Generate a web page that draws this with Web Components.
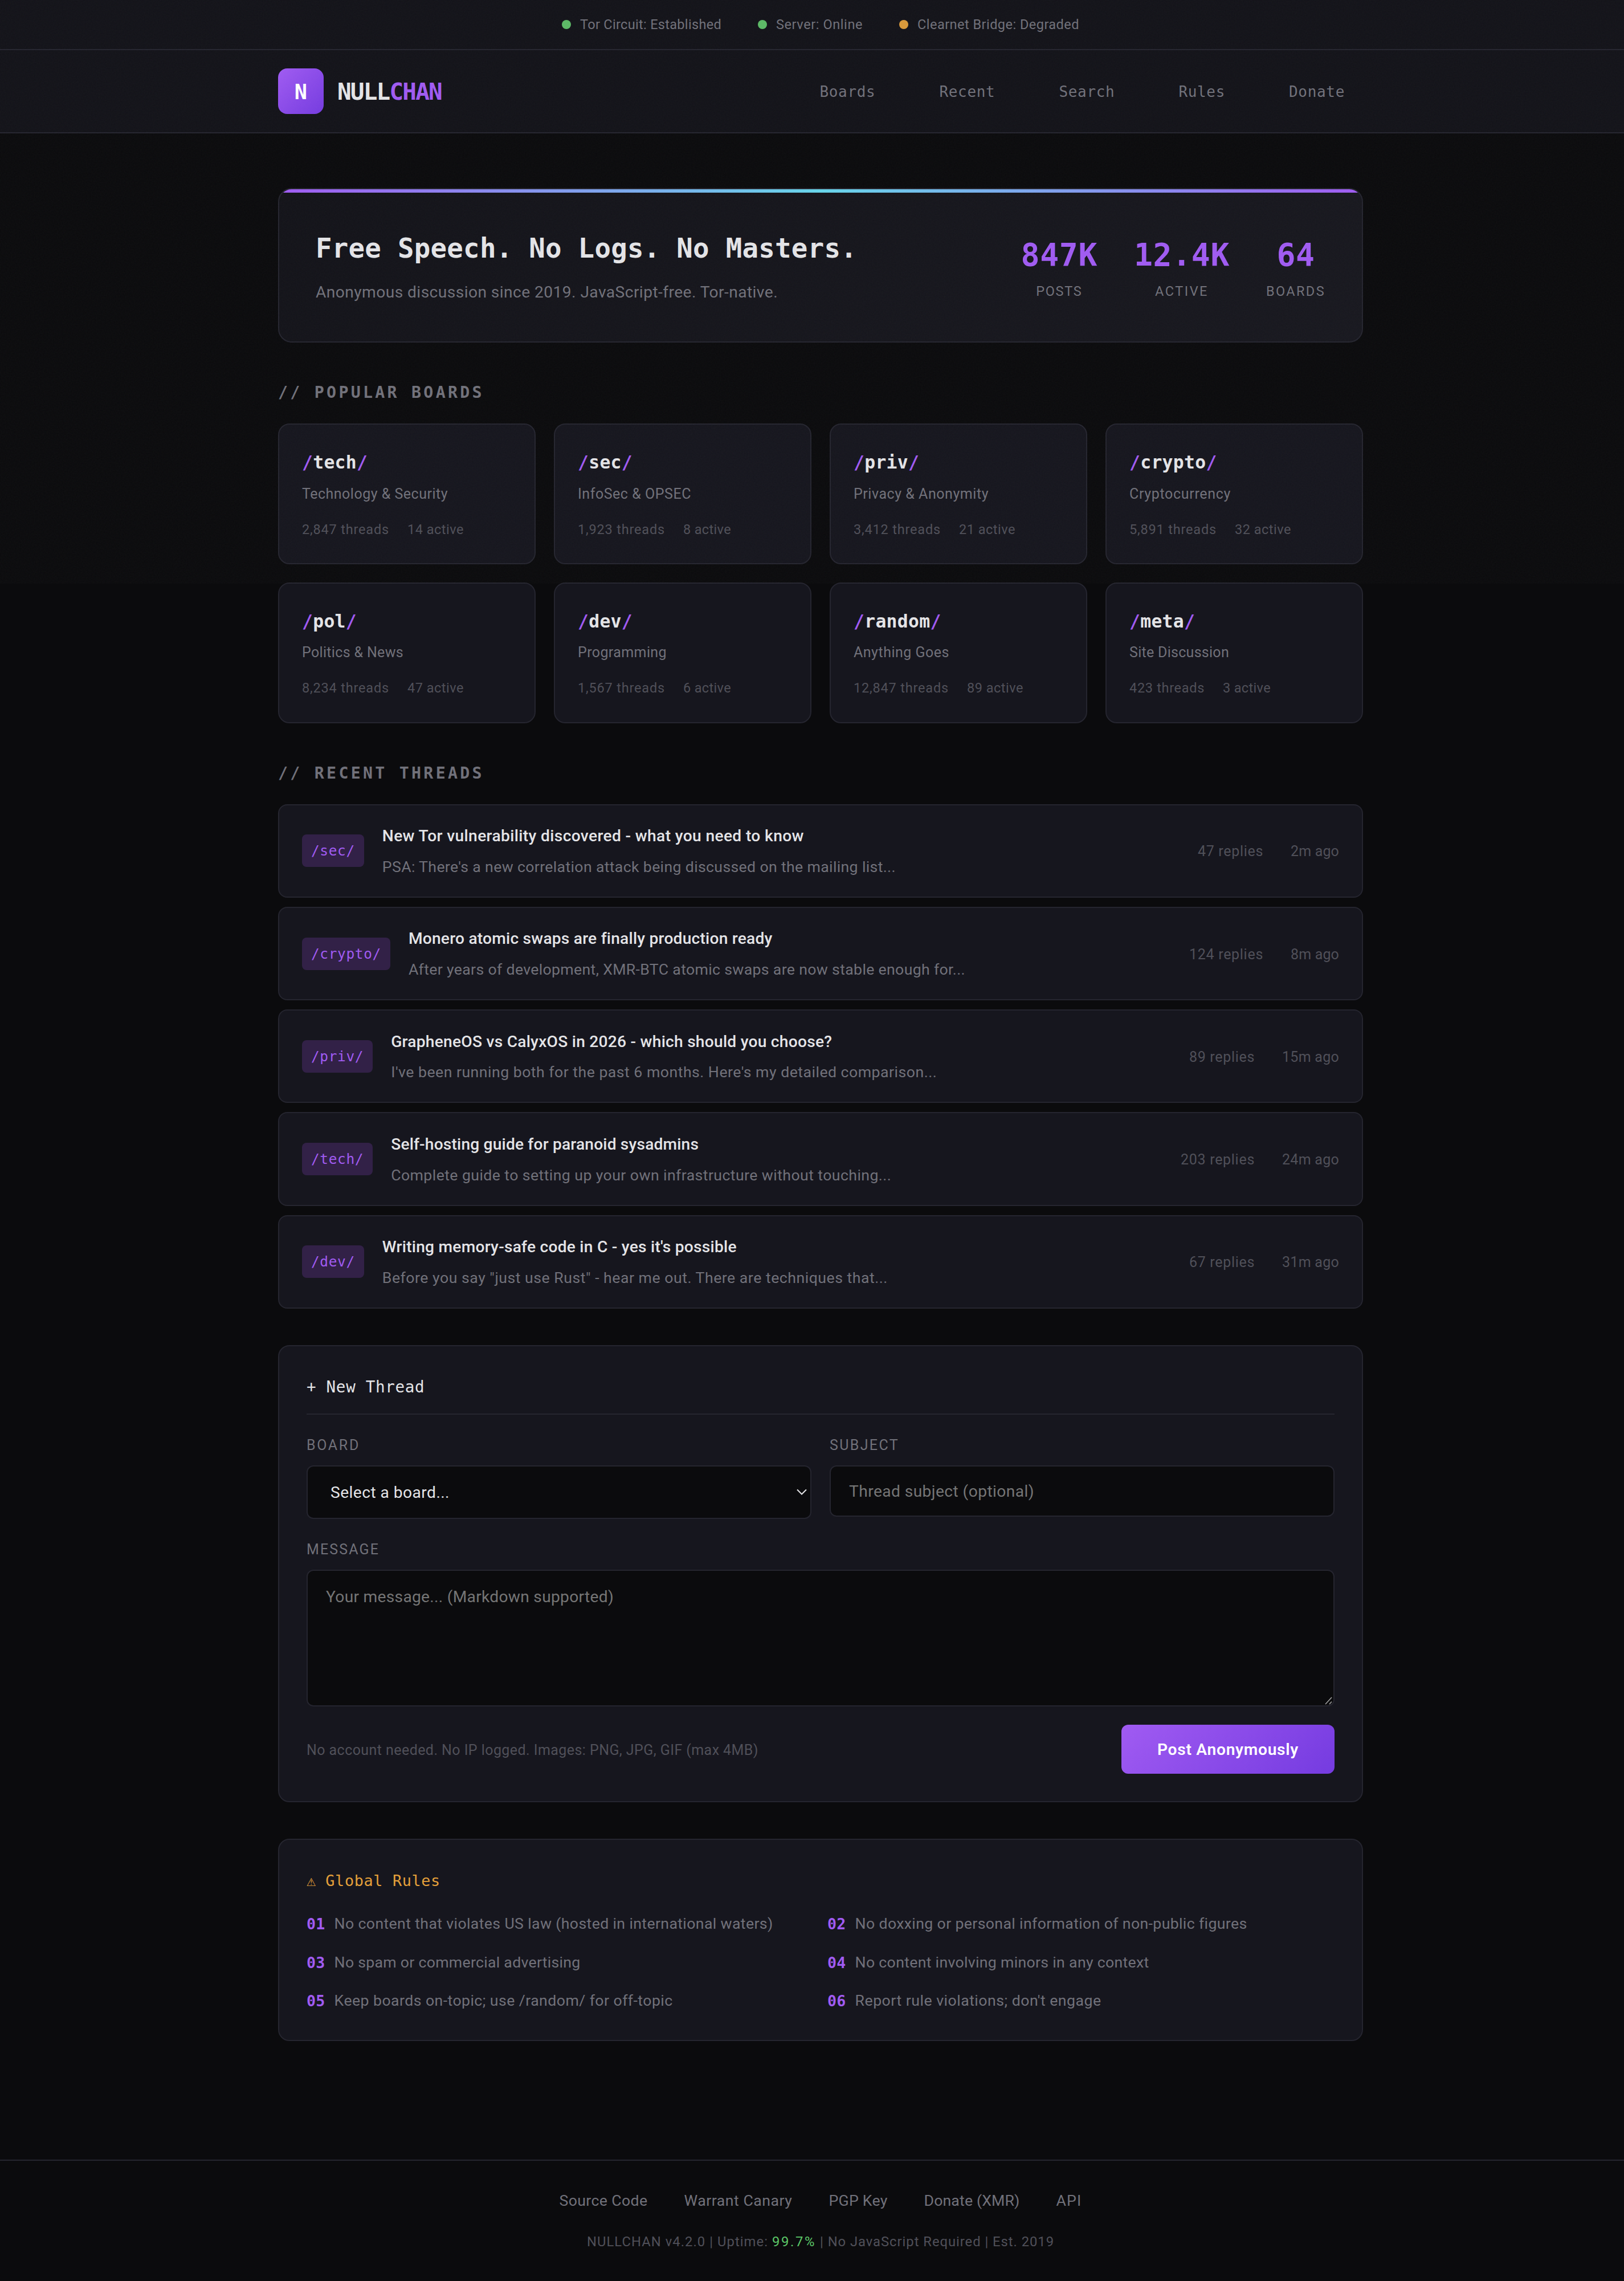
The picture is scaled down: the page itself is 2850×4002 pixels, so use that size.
<!DOCTYPE html>
<html lang="en">
<head>
<meta charset="utf-8">
<title>NULLCHAN</title>
<style>
    :root {
        --bg: #0b0b0d;
        --bg-raised: #131319;
        --card: #16161e;
        --border: #25252f;
        --text: #e4e4e7;
        --muted: #71717a;
        --dim: #505059;
        --accent: #a05bf2;
        --accent-deep: #753be0;
        --green: #5cba66;
        --amber: #e5a03a;
        --sans: Roboto, "Open Sans", sans-serif;
        --mono: "DejaVu Sans Mono", "Liberation Mono", monospace;
    }
    html {
        overflow: hidden;
        background: var(--bg);
    }
    body {
        margin: 0;
        width: 2880px;
        height: 4002px;
        overflow: hidden;
        background: var(--bg);
        color: var(--text);
        font-family: var(--sans);
    }
    main {
        width: 1904px;
        margin: 0 auto;
        padding-top: 96px;
    }
    .boards {
        display: grid;
        grid-template-columns: repeat(4, 1fr);
        gap: 32px;
        margin-bottom: 64px;
    }
    .threads {
        display: grid;
        gap: 16px;
        margin-bottom: 64px;
    }
</style>
</head>
<body>
<noise-layer></noise-layer>
<status-bar>
    <status-item w="248">Tor Circuit: Established</status-item>
    <status-item w="152">Server: Online</status-item>
    <status-item w="284" state="warn">Clearnet Bridge: Degraded</status-item>
</status-bar>
<site-header></site-header>
<main>
    <hero-banner>
        <hero-stat value="847K" label="Posts" w="81"></hero-stat>
        <hero-stat value="12.4K" label="Active" w="94"></hero-stat>
        <hero-stat value="64" label="Boards" w="104"></hero-stat>
    </hero-banner>

    <section-title>// POPULAR BOARDS</section-title>
    <div class="boards">
        <board-card name="tech" desc="Technology &amp; Security" dw="256" threads="2,847" tw="153" active="14" aw="99"></board-card>
        <board-card name="sec" desc="InfoSec &amp; OPSEC" dw="199" threads="1,923" tw="153" active="8" aw="84"></board-card>
        <board-card name="priv" desc="Privacy &amp; Anonymity" dw="237" threads="3,412" tw="153" active="21" aw="99"></board-card>
        <board-card name="crypto" desc="Cryptocurrency" dw="178" threads="5,891" tw="153" active="32" aw="99"></board-card>
        <board-card name="pol" desc="Politics &amp; News" dw="178" threads="8,234" tw="153" active="47" aw="99"></board-card>
        <board-card name="dev" desc="Programming" dw="156" threads="1,567" tw="153" active="6" aw="84"></board-card>
        <board-card name="random" desc="Anything Goes" dw="168" threads="12,847" tw="167" active="89" aw="99"></board-card>
        <board-card name="meta" desc="Site Discussion" dw="175" threads="423" tw="132" active="3" aw="84"></board-card>
    </div>

    <section-title>// RECENT THREADS</section-title>
    <div class="threads">
        <thread-row board="/sec/" replies="47 replies" rw="115" time="2m ago" mw="85">
            <fit-text w="740">New Tor vulnerability discovered - what you need to know</fit-text>
            <fit-text slot="excerpt" w="901">PSA: There's a new correlation attack being discussed on the mailing list...</fit-text>
        </thread-row>
        <thread-row board="/crypto/" replies="124 replies" rw="130" time="8m ago" mw="85">
            <fit-text w="638">Monero atomic swaps are finally production ready</fit-text>
            <fit-text slot="excerpt" w="977">After years of development, XMR-BTC atomic swaps are now stable enough for...</fit-text>
        </thread-row>
        <thread-row board="/priv/" replies="89 replies" rw="115" time="15m ago" mw="100">
            <fit-text w="774">GrapheneOS vs CalyxOS in 2026 - which should you choose?</fit-text>
            <fit-text slot="excerpt" w="958">I've been running both for the past 6 months. Here's my detailed comparison...</fit-text>
        </thread-row>
        <thread-row board="/tech/" replies="203 replies" rw="130" time="24m ago" mw="100">
            <fit-text w="540">Self-hosting guide for paranoid sysadmins</fit-text>
            <fit-text slot="excerpt" w="878">Complete guide to setting up your own infrastructure without touching...</fit-text>
        </thread-row>
        <thread-row board="/dev/" replies="67 replies" rw="115" time="31m ago" mw="100">
            <fit-text w="622">Writing memory-safe code in C - yes it's possible</fit-text>
            <fit-text slot="excerpt" w="887">Before you say "just use Rust" - hear me out. There are techniques that...</fit-text>
        </thread-row>
    </div>

    <post-form></post-form>

    <rules-box>
        <rule-item num="01" w="770">No content that violates US law (hosted in international waters)</rule-item>
        <rule-item num="02" w="687">No doxxing or personal information of non-public figures</rule-item>
        <rule-item num="03" w="432">No spam or commercial advertising</rule-item>
        <rule-item num="04" w="516">No content involving minors in any context</rule-item>
        <rule-item num="05" w="594">Keep boards on-topic; use /random/ for off-topic</rule-item>
        <rule-item num="06" w="432">Report rule violations; don't engage</rule-item>
    </rules-box>
</main>
<site-footer></site-footer>

<script>
    // Base class: renders template() into an open shadow root
    class BaseElement extends HTMLElement {
        constructor() {
            super();
            this.attachShadow({ mode: 'open' });
        }

        connectedCallback() {
            this.shadowRoot.innerHTML = this.template();
        }

        attr(name) {
            return this.getAttribute(name) || '';
        }
    }

    // Single line of text, tracked so that it is exactly `w` pixels wide
    class FitText extends BaseElement {
        template() {
            return `
                <style>
                    :host {
                        display: inline-block;
                        white-space: nowrap;
                        transform: translateY(0.02em);
                    }
                </style>
                <slot></slot>
            `;
        }

        connectedCallback() {
            super.connectedCallback();
            requestAnimationFrame(() => this.fit());
            this.fit();
        }

        fit() {
            const target = parseFloat(this.getAttribute('w'));
            const length = this.textContent.length;
            if (!target || !length) return;
            this.style.letterSpacing = '0px';
            const range = document.createRange();
            range.selectNodeContents(this);
            const natural = range.getBoundingClientRect().width;
            if (natural) {
                this.style.letterSpacing = (target - natural) / length + 'px';
            }
        }
    }

    // Faint film grain over the first screen
    class NoiseLayer extends BaseElement {
        template() {
            return `
                <style>
                    :host {
                        position: absolute;
                        top: 0;
                        left: 0;
                        z-index: 10;
                        pointer-events: none;
                        opacity: 0.03;
                    }
                    svg { display: block; }
                </style>
                <svg width="2850" height="1024">
                    <filter id="noise" x="0" y="0" width="100%" height="100%">
                        <feTurbulence type="fractalNoise" baseFrequency="0.45" numOctaves="4" stitchTiles="stitch"/>
                    </filter>
                    <rect width="2850" height="1024" filter="url(#noise)"/>
                </svg>
            `;
        }
    }

    class StatusBar extends BaseElement {
        template() {
            return `
                <style>
                    :host {
                        display: flex;
                        justify-content: center;
                        gap: 64px;
                        padding: 24px 0;
                        background: var(--bg-raised);
                        border-bottom: 2px solid var(--border);
                    }
                </style>
                <slot></slot>
            `;
        }
    }

    class StatusItem extends BaseElement {
        template() {
            return `
                <style>
                    :host {
                        display: flex;
                        align-items: center;
                        gap: 16px;
                        font-size: 23.5px;
                        line-height: 38.4px;
                        color: var(--muted);
                    }
                    .dot {
                        width: 16px;
                        height: 16px;
                        border-radius: 50%;
                        background: var(--green);
                    }
                    :host([state="warn"]) .dot { background: #d9993a; }
                </style>
                <span class="dot"></span>
                <fit-text w="${this.attr('w')}">${this.textContent}</fit-text>
            `;
        }
    }

    class SiteHeader extends BaseElement {
        template() {
            const links = [['Boards', 98], ['Recent', 98], ['Search', 98], ['Rules', 81.6], ['Donate', 98]];
            return `
                <style>
                    :host {
                        display: block;
                        background: var(--bg-raised);
                        border-bottom: 2px solid var(--border);
                    }
                    .inner {
                        display: flex;
                        justify-content: space-between;
                        align-items: center;
                        width: 1904px;
                        margin: 0 auto;
                        padding: 32px 0;
                        font-family: var(--mono);
                    }
                    .logo {
                        display: flex;
                        align-items: center;
                        gap: 24px;
                        font-size: 41px;
                        font-weight: 700;
                    }
                    .mark {
                        display: flex;
                        align-items: center;
                        justify-content: center;
                        width: 80px;
                        height: 80px;
                        border-radius: 16px;
                        background: linear-gradient(135deg, var(--accent), var(--accent-deep));
                        color: #fff;
                        font-size: 37px;
                    }
                    .logo em {
                        font-style: normal;
                        color: var(--accent);
                    }
                    nav {
                        display: flex;
                        gap: 112px;
                        padding-right: 32px;
                        font-size: 26px;
                        color: var(--muted);
                    }
                </style>
                <div class="inner">
                    <div class="logo">
                        <span class="mark"><fit-text>N</fit-text></span>
                        <fit-text w="183">NULL<em>CHAN</em></fit-text>
                    </div>
                    <nav>
                        ${links.map(([name, w]) => `<fit-text w="${w}">${name}</fit-text>`).join('')}
                    </nav>
                </div>
            `;
        }
    }

    class HeroBanner extends BaseElement {
        template() {
            return `
                <style>
                    :host {
                        display: flex;
                        position: relative;
                        justify-content: space-between;
                        align-items: center;
                        box-sizing: border-box;
                        height: 271px;
                        padding: 0 64px;
                        margin-bottom: 64px;
                        overflow: hidden;
                        border: 2px solid var(--border);
                        border-radius: 24px;
                        background: linear-gradient(135deg, var(--bg-raised), #18181f);
                    }
                    .bar {
                        position: absolute;
                        top: 0;
                        left: 0;
                        right: 0;
                        height: 6px;
                        background: linear-gradient(90deg, var(--accent), #67d5ea, var(--accent));
                    }
                    h1 {
                        margin: 0 0 16px;
                        font: 700 47.4px/76.8px var(--mono);
                    }
                    p {
                        margin: 0;
                        font-size: 28.2px;
                        line-height: 46px;
                        color: var(--muted);
                    }
                    .stats {
                        display: flex;
                        gap: 64px;
                    }
                </style>
                <div class="bar"></div>
                <div>
                    <h1><fit-text w="950">Free Speech. No Logs. No Masters.</fit-text></h1>
                    <p><fit-text w="811">Anonymous discussion since 2019. JavaScript-free. Tor-native.</fit-text></p>
                </div>
                <div class="stats"><slot></slot></div>
            `;
        }
    }

    class HeroStat extends BaseElement {
        template() {
            const value = this.attr('value');
            return `
                <style>
                    :host {
                        display: block;
                        text-align: center;
                    }
                    .value {
                        font: 700 54.8px/89.6px var(--mono);
                        color: var(--accent);
                    }
                    .label {
                        font-size: 23.5px;
                        line-height: 38.4px;
                        color: var(--muted);
                    }
                </style>
                <div class="value"><fit-text w="${value.length * 33.6}">${value}</fit-text></div>
                <div class="label"><fit-text w="${this.attr('w')}">${this.attr('label').toUpperCase()}</fit-text></div>
            `;
        }
    }

    class SectionTitle extends BaseElement {
        template() {
            return `
                <style>
                    :host {
                        display: block;
                        margin-bottom: 32px;
                        font: 700 28.3px/46px var(--mono);
                        color: var(--muted);
                    }
                </style>
                <fit-text w="${this.textContent.length * 21.28}">${this.textContent}</fit-text>
            `;
        }
    }

    class BoardCard extends BaseElement {
        template() {
            const name = this.attr('name');
            return `
                <style>
                    :host {
                        display: block;
                        box-sizing: border-box;
                        height: 246.6px;
                        padding: 40px;
                        border: 2px solid var(--border);
                        border-radius: 20px;
                        background: var(--card);
                    }
                    .name {
                        margin-bottom: 8px;
                        font: 700 31.4px/51.2px var(--mono);
                    }
                    .name i {
                        font-style: normal;
                        color: var(--accent);
                    }
                    .desc {
                        margin-bottom: 24px;
                        font-size: 25px;
                        line-height: 41px;
                        color: var(--muted);
                    }
                    .meta {
                        display: flex;
                        gap: 32px;
                        font-size: 23.5px;
                        line-height: 38.4px;
                        color: var(--dim);
                    }
                </style>
                <div class="name"><fit-text w="${(name.length + 2) * 19.2}"><i>/</i>${name}<i>/</i></fit-text></div>
                <div class="desc"><fit-text w="${this.attr('dw')}">${this.attr('desc').replace('&', '&amp;')}</fit-text></div>
                <div class="meta">
                    <fit-text w="${this.attr('tw')}">${this.attr('threads')} threads</fit-text>
                    <fit-text w="${this.attr('aw')}">${this.attr('active')} active</fit-text>
                </div>
            `;
        }
    }

    class ThreadRow extends BaseElement {
        template() {
            const board = this.attr('board');
            return `
                <style>
                    :host {
                        display: flex;
                        align-items: center;
                        gap: 32px;
                        box-sizing: border-box;
                        height: 164.3px;
                        padding: 0 40px;
                        border: 2px solid var(--border);
                        border-radius: 16px;
                        background: var(--card);
                    }
                    .badge {
                        padding: 8px 16px;
                        border-radius: 8px;
                        background: #322147;
                        color: var(--accent);
                        font: 24.5px/41px var(--mono);
                    }
                    .body {
                        flex: 1;
                        padding-top: 3px;
                    }
                    .title {
                        margin-bottom: 12.4px;
                        font-size: 28.2px;
                        font-weight: 500;
                        line-height: 40.3px;
                    }
                    .excerpt {
                        font-size: 26.7px;
                        line-height: 43.5px;
                        color: var(--muted);
                    }
                    .meta {
                        display: flex;
                        gap: 48px;
                        font-size: 25px;
                        line-height: 41px;
                        color: var(--dim);
                    }
                </style>
                <div class="badge"><fit-text w="${board.length * 15.36}">${board}</fit-text></div>
                <div class="body">
                    <div class="title"><slot></slot></div>
                    <div class="excerpt"><slot name="excerpt"></slot></div>
                </div>
                <div class="meta">
                    <fit-text w="${this.attr('rw')}">${this.attr('replies')}</fit-text>
                    <fit-text w="${this.attr('mw')}">${this.attr('time')}</fit-text>
                </div>
            `;
        }
    }

    class PostForm extends BaseElement {
        template() {
            return `
                <style>
                    :host {
                        display: block;
                        box-sizing: border-box;
                        height: 802px;
                        padding: 48px;
                        margin-bottom: 64px;
                        border: 2px solid var(--border);
                        border-radius: 20px;
                        background: var(--card);
                    }
                    h2 {
                        margin: 0 0 32px;
                        padding-bottom: 24px;
                        border-bottom: 2px solid var(--border);
                        font: 400 27.6px/46px var(--mono);
                    }
                    .row {
                        display: grid;
                        grid-template-columns: 1fr 1fr;
                        align-items: start;
                        gap: 32px;
                        margin-bottom: 32px;
                    }
                    label {
                        display: block;
                        margin-bottom: 16px;
                        font-size: 25px;
                        line-height: 41px;
                        color: var(--muted);
                    }
                    .field {
                        display: flex;
                        align-items: center;
                        box-sizing: border-box;
                        height: 90px;
                        padding: 0 32px;
                        border: 2px solid var(--border);
                        border-radius: 12px;
                        background: var(--bg);
                        color: #757575;
                        font-size: 28.2px;
                        line-height: 46px;
                    }
                    .select {
                        justify-content: space-between;
                        height: 94px;
                        padding: 0 5px 0 40px;
                        color: var(--text);
                    }
                    .area {
                        position: relative;
                        align-items: flex-start;
                        height: 240px;
                        padding-top: 22px;
                    }
                    .grip {
                        position: absolute;
                        right: 1px;
                        bottom: 1px;
                    }
                    .foot {
                        display: flex;
                        justify-content: space-between;
                        align-items: center;
                        margin-top: 32px;
                        font-size: 25px;
                        line-height: 41px;
                        color: var(--dim);
                    }
                    button {
                        width: 374px;
                        height: 86px;
                        padding: 0;
                        border: 0;
                        border-radius: 12px;
                        background: linear-gradient(135deg, var(--accent), var(--accent-deep));
                        color: #fff;
                        font: 600 28.2px/46px var(--sans);
                    }
                </style>
                <h2><fit-text w="207.4">+ New Thread</fit-text></h2>
                <div class="row">
                    <div>
                        <label><fit-text w="94">BOARD</fit-text></label>
                        <div class="field select">
                            <fit-text w="209">Select a board...</fit-text>
                            <svg width="20" height="14" viewBox="0 0 20 14" fill="none" stroke="#e4e4e7" stroke-width="2">
                                <path d="M2 2.5 10 10.5 18 2.5"/>
                            </svg>
                        </div>
                    </div>
                    <div>
                        <label><fit-text w="122">SUBJECT</fit-text></label>
                        <div class="field"><fit-text w="325">Thread subject (optional)</fit-text></div>
                    </div>
                </div>
                <label><fit-text w="128">MESSAGE</fit-text></label>
                <div class="field area">
                    <fit-text w="505">Your message... (Markdown supported)</fit-text>
                    <svg class="grip" width="14" height="14" viewBox="0 0 14 14" stroke="#a0a0a0" stroke-width="1.6">
                        <path d="M1 13 12 1M8 13l4-4.5"/>
                    </svg>
                </div>
                <div class="foot">
                    <fit-text w="793">No account needed. No IP logged. Images: PNG, JPG, GIF (max 4MB)</fit-text>
                    <button><fit-text w="248">Post Anonymously</fit-text></button>
                </div>
            `;
        }
    }

    class RulesBox extends BaseElement {
        template() {
            return `
                <style>
                    :host {
                        display: block;
                        box-sizing: border-box;
                        height: 354.6px;
                        padding: 48px;
                        border: 2px solid var(--border);
                        border-radius: 20px;
                        background: var(--card);
                    }
                    h2 {
                        display: flex;
                        gap: 16px;
                        margin: 0 0 32px;
                        font: 400 26.8px/45px var(--mono);
                        color: var(--amber);
                    }
                    .warn {
                        width: 17.3px;
                        font-size: 27px;
                    }
                    .rules {
                        display: grid;
                        grid-template-columns: 1fr 1fr;
                        gap: 24px;
                    }
                </style>
                <h2><span class="warn"><fit-text>⚠</fit-text></span><fit-text w="201.6">Global Rules</fit-text></h2>
                <div class="rules"><slot></slot></div>
            `;
        }
    }

    class RuleItem extends BaseElement {
        template() {
            return `
                <style>
                    :host {
                        display: flex;
                        gap: 16px;
                        font-size: 26.7px;
                        line-height: 43.5px;
                        color: var(--muted);
                    }
                    b {
                        font-family: var(--mono);
                        font-size: 26.6px;
                        color: var(--accent);
                    }
                </style>
                <b><fit-text w="32.6">${this.attr('num')}</fit-text></b>
                <fit-text w="${this.attr('w')}">${this.textContent}</fit-text>
            `;
        }
    }

    class SiteFooter extends BaseElement {
        template() {
            const links = [['Source Code', 155], ['Warrant Canary', 190], ['PGP Key', 103], ['Donate (XMR)', 168], ['API', 45]];
            return `
                <style>
                    :host {
                        display: block;
                        margin-top: 208px;
                        padding: 48px 0 0;
                        border-top: 2px solid var(--border);
                    }
                    .links, .info {
                        display: flex;
                        justify-content: center;
                    }
                    .links {
                        gap: 64px;
                        margin-bottom: 32px;
                        font-size: 26.7px;
                        line-height: 43.5px;
                        color: var(--muted);
                    }
                    .info {
                        gap: 7px;
                        font-size: 23.8px;
                        line-height: 39.4px;
                        color: var(--dim);
                    }
                    .up { color: #5cc868; }
                </style>
                <div class="links">
                    ${links.map(([name, w]) => `<fit-text w="${w}">${name}</fit-text>`).join('')}
                </div>
                <div class="info">
                    <fit-text w="318">NULLCHAN v4.2.0 | Uptime:</fit-text>
                    <fit-text class="up" w="77">99.7%</fit-text>
                    <fit-text w="411">| No JavaScript Required | Est. 2019</fit-text>
                </div>
            `;
        }
    }

    customElements.define('noise-layer', NoiseLayer);
    customElements.define('status-item', StatusItem);
    customElements.define('status-bar', StatusBar);
    customElements.define('site-header', SiteHeader);
    customElements.define('hero-stat', HeroStat);
    customElements.define('hero-banner', HeroBanner);
    customElements.define('section-title', SectionTitle);
    customElements.define('board-card', BoardCard);
    customElements.define('thread-row', ThreadRow);
    customElements.define('post-form', PostForm);
    customElements.define('rule-item', RuleItem);
    customElements.define('rules-box', RulesBox);
    customElements.define('site-footer', SiteFooter);
    // fit-text goes last: it measures itself inside the finished layout
    customElements.define('fit-text', FitText);
</script>
</body>
</html>
